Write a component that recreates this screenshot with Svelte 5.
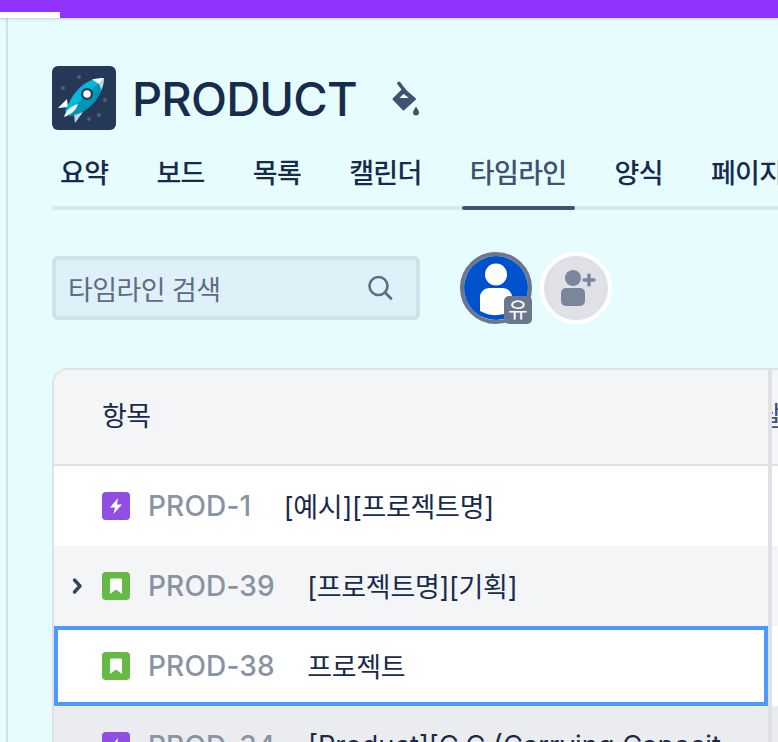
<script lang="ts">
  const tabs = ['요약', '보드', '목록', '캘린더', '타임라인', '양식', '페이지'];
  const rows = [
    { key: 'PROD-1', type: 'epic', title: '[예시][프로젝트명]', tone: 'plain' },
    { key: 'PROD-39', type: 'story', title: '[프로젝트명][기획]', tone: 'soft', chevron: true },
    { key: 'PROD-38', type: 'story', title: '프로젝트', tone: 'focus' },
    { key: 'PROD-34', type: 'epic', title: '[Product][C.C (Carrying Capacit', tone: 'dim' }
  ];
</script>

<div class="page">
  <div class="topbar"><div class="progress"></div></div>
  <div class="shell">
    <div class="rail"></div>
    <main>
      <header class="title">
        <svg class="logo" viewBox="0 0 64 64" width="64" height="64" aria-hidden="true">
          <rect width="64" height="64" rx="6" fill="#253858" />
          <g fill="#505f79">
            <circle cx="27" cy="11" r="2" />
            <circle cx="11" cy="22" r="2" />
            <circle cx="53" cy="34" r="2" />
            <circle cx="47" cy="49" r="2" />
            <circle cx="37" cy="53" r="2" />
          </g>
          <path d="M15 33 L6 42 L16 41Z" fill="#fff" />
          <path d="M31 46 L23 57 L22 48Z" fill="#c1d5e0" />
          <path d="M52 12 C41 12 29 17 20 31 L13 45 L18 50 C36 47 51 31 52 12Z" fill="#00b8d9" />
          <path d="M52 12 C51 31 36 47 18 50 L15.500 47.500 Z" fill="#0095b0" />
          <path d="M40 13.500 C45 12.500 49 12 52 12 L47 18Z" fill="#fff" />
          <path d="M47 18 L52 12 C52 16 51 20 49.500 24Z" fill="#c1d5e0" />
          <path d="M12 51 C14 44 19 40 26 38 C24 45 18 49 12 51Z" fill="#ebf2f5" />
          <circle cx="35" cy="28" r="6" fill="#253858" />
          <circle cx="35" cy="28" r="3.800" fill="#fff" />
        </svg>
        <h1>PRODUCT</h1>
        <svg class="paint" viewBox="0 0 28 36" width="28" height="36" aria-hidden="true">
          <path d="M8 2.500 L13 9" fill="none" stroke="#42526e" stroke-width="3.600" stroke-linecap="round" />
          <path d="M12.500 8 L2.500 18 L12.500 28.500 L24 18 Z M12.500 11.500 L6 18 L20.500 18 Z" fill="#42526e" fill-rule="evenodd" stroke="#42526e" stroke-width="2" stroke-linejoin="round" />
          <path d="M25 25.500 C26 27.500 28 29.500 28 31.500 A3 3 0 0 1 22 31.500 C22 29.500 24 27.500 25 25.500Z" fill="#42526e" />
        </svg>
      </header>

      <nav class="tabs">
        {#each tabs as tab (tab)}
          <span class="tab" class:active={tab === '타임라인'}>{tab}</span>
        {/each}
      </nav>

      <div class="filters">
        <div class="search">
          <span class="placeholder">타임라인 검색</span>
          <svg viewBox="0 0 26 26" width="26" height="26" aria-hidden="true">
            <circle cx="11.500" cy="11" r="9" fill="none" stroke="#5e6c84" stroke-width="2.600" />
            <path d="M18 17.500 L24 23.500" stroke="#5e6c84" stroke-width="2.800" stroke-linecap="round" />
          </svg>
        </div>
        <div class="avatars">
          <div class="avatar user">
            <svg viewBox="0 0 64 64" width="64" height="64" aria-hidden="true">
              <circle cx="32" cy="32" r="32" fill="#0052cc" />
              <circle cx="32" cy="18.500" r="11" fill="#fff" />
              <path d="M16 41 a9 9 0 0 1 9-9 h14 a9 9 0 0 1 9 9 v14 a32 32 0 0 1 -32 0z" fill="#fff" />
            </svg>
            <span class="badge">유</span>
          </div>
          <div class="avatar add">
            <svg viewBox="0 0 64 64" width="64" height="64" aria-hidden="true">
              <circle cx="29" cy="22" r="8" fill="#7a869a" />
              <rect x="17" y="32" width="24" height="18" rx="5" fill="#7a869a" />
              <path d="M40 24 h10 M45 19 v10" stroke="#7a869a" stroke-width="3.400" stroke-linecap="round" />
            </svg>
          </div>
        </div>
      </div>

      <section class="grid">
        <div class="head">
          <div class="cell-head">항목</div>
          <div class="side"><span class="side-text">날</span></div>
        </div>
        {#each rows as row (row.key)}
          <div class="row {row.tone}">
            <div class="cell">
              <span class="chevron">
                {#if row.chevron}
                  <svg viewBox="0 0 12 18" width="12" height="18" aria-hidden="true">
                    <path d="M3.500 3 L9 9 L3.500 15" fill="none" stroke="#344563" stroke-width="3.400" stroke-linecap="round" stroke-linejoin="round" />
                  </svg>
                {/if}
              </span>
              {#if row.type === 'epic'}
                <svg class="type" viewBox="0 0 28 28" width="28" height="28" aria-hidden="true">
                  <rect width="28" height="28" rx="4" fill="#904ee2" />
                  <path d="M16 6 L8 15.500 H13 L11.500 22 L20 12.500 H15 Z" fill="#fff" />
                </svg>
              {:else}
                <svg class="type" viewBox="0 0 28 28" width="28" height="28" aria-hidden="true">
                  <rect width="28" height="28" rx="4" fill="#65ba43" />
                  <path d="M8 8 a1.500 1.500 0 0 1 1.500-1.500 h9 a1.500 1.500 0 0 1 1.500 1.500 V22 L14 17.500 L8 22Z" fill="#fff" />
                </svg>
              {/if}
              <span class="key">{row.key}</span>
              <span class="summary">{row.title}</span>
            </div>
            <div class="side"></div>
          </div>
        {/each}
      </section>
    </main>
  </div>
</div>

<style>
  :global(body) {
    margin: 0;
    background: #e6fcff;
    overflow: hidden;
  }

  .page {
    width: 778px;
    height: 742px;
    overflow: hidden;
    font-family: Inter, "Noto Sans CJK KR", "Liberation Sans", sans-serif;
    color: #172b4d;
  }

  .topbar {
    height: 18px;
    background: #9033ff;
    display: flex;
    align-items: flex-end;
    box-shadow: 0 1px 3px rgba(9, 30, 66, 0.2);
    position: relative;
  }

  .progress {
    width: 60px;
    height: 6px;
    background: #fff;
  }

  .shell {
    display: flex;
    height: 724px;
  }

  .rail {
    width: 6px;
    flex: none;
    border-right: 2px solid #cfe4ea;
  }

  main {
    flex: none;
    width: 770px;
    padding: 48px 0 0 44px;
    box-sizing: border-box;
  }

  .title {
    display: flex;
    align-items: center;
    height: 64px;
  }

  h1 {
    margin: 2px 0 0 16px;
    font-size: 47px;
    font-weight: 500;
    line-height: 64px;
    letter-spacing: -0.8px;
    white-space: nowrap;
  }

  .paint {
    margin-left: 34px;
    margin-top: 2px;
  }

  .tabs {
    display: flex;
    margin-top: 16px;
    width: 726px;
    height: 60px;
    border-bottom: 4px solid #d5e9ef;
  }

  .tab {
    position: relative;
    flex: none;
    height: 64px;
    padding: 0 8px;
    margin-right: 32px;
    box-sizing: border-box;
    font-size: 27px;
    font-weight: 500;
    letter-spacing: -0.65px;
    line-height: 56px;
    white-space: nowrap;
  }

  .tab.active {
    color: #42526e;
  }

  .tab.active::after {
    content: '';
    position: absolute;
    left: 0;
    right: 0;
    bottom: 0;
    height: 4px;
    border-radius: 2px;
    background: #42526e;
  }

  .filters {
    display: flex;
    align-items: flex-start;
    margin-top: 42px;
    height: 72px;
  }

  .search {
    margin-top: 4px;
    width: 368px;
    height: 64px;
    box-sizing: border-box;
    border: 4px solid #cfe2ec;
    border-radius: 6px;
    background: #def0f8;
    display: flex;
    align-items: center;
    justify-content: space-between;
    padding: 0 23px 0 12px;
  }

  .placeholder {
    font-size: 27px;
    letter-spacing: -0.6px;
    color: #5e6c84;
  }

  .search svg {
    flex: none;
  }

  .avatars {
    display: flex;
    margin-left: 40px;
    gap: 8px;
  }

  .avatar {
    width: 72px;
    height: 72px;
    box-sizing: border-box;
    border-radius: 50%;
    border: 4px solid #fff;
    position: relative;
    flex: none;
  }

  .avatar.user {
    border-color: #6b778c;
  }

  .avatar.add {
    background: #dfe1e6;
  }

  .avatar svg {
    display: block;
  }

  .badge {
    position: absolute;
    right: -4px;
    bottom: -4px;
    width: 28px;
    height: 28px;
    border-radius: 5px;
    background: #6b778c;
    color: #fff;
    font-size: 21px;
    line-height: 28px;
    text-align: center;
  }

  .grid {
    margin-top: 44px;
    width: 726px;
    border: solid #dfe1e6;
    border-width: 2px 0 0 2px;
    border-top-left-radius: 16px;
    overflow: hidden;
  }

  .head,
  .row {
    display: flex;
  }

  .head {
    height: 94px;
    background: #f4f5f7;
    border-bottom: 2px solid #dfe1e6;
  }

  .cell-head {
    width: 714px;
    flex: none;
    padding-left: 48px;
    box-sizing: border-box;
    font-size: 27px;
    letter-spacing: -0.6px;
    line-height: 94px;
  }

  .side {
    flex: 1;
    border-left: 4px solid #dfe1e6;
    overflow: hidden;
  }

  .side-text {
    display: block;
    font-size: 27px;
    line-height: 94px;
    margin-left: -15px;
    color: #42526e;
  }

  .row {
    height: 80px;
    background: #fff;
  }

  .row.soft {
    background: #f4f5f7;
  }

  .row.dim {
    background: #ebecf0;
  }

  .cell {
    width: 714px;
    flex: none;
    display: flex;
    align-items: center;
    box-sizing: border-box;
    padding-left: 48px;
    position: relative;
    font-size: 28px;
    white-space: nowrap;
    overflow: hidden;
  }

  .row.focus .cell {
    outline: 4px solid #4c9aff;
    outline-offset: -4px;
  }

  .chevron {
    position: absolute;
    left: 17px;
    top: 31px;
    width: 12px;
    height: 18px;
  }

  .chevron svg {
    display: block;
  }

  .type {
    flex: none;
  }

  .key {
    margin-left: 18px;
    margin-right: 32.500px;
    font-weight: 500;
    letter-spacing: 0.15px;
    color: #8993a4;
  }

  .summary {
    margin-top: -2px;
    font-size: 27px;
    letter-spacing: -0.3px;
  }

  .dim .summary {
    font-size: 27.300px;
    letter-spacing: 0;
  }
</style>
